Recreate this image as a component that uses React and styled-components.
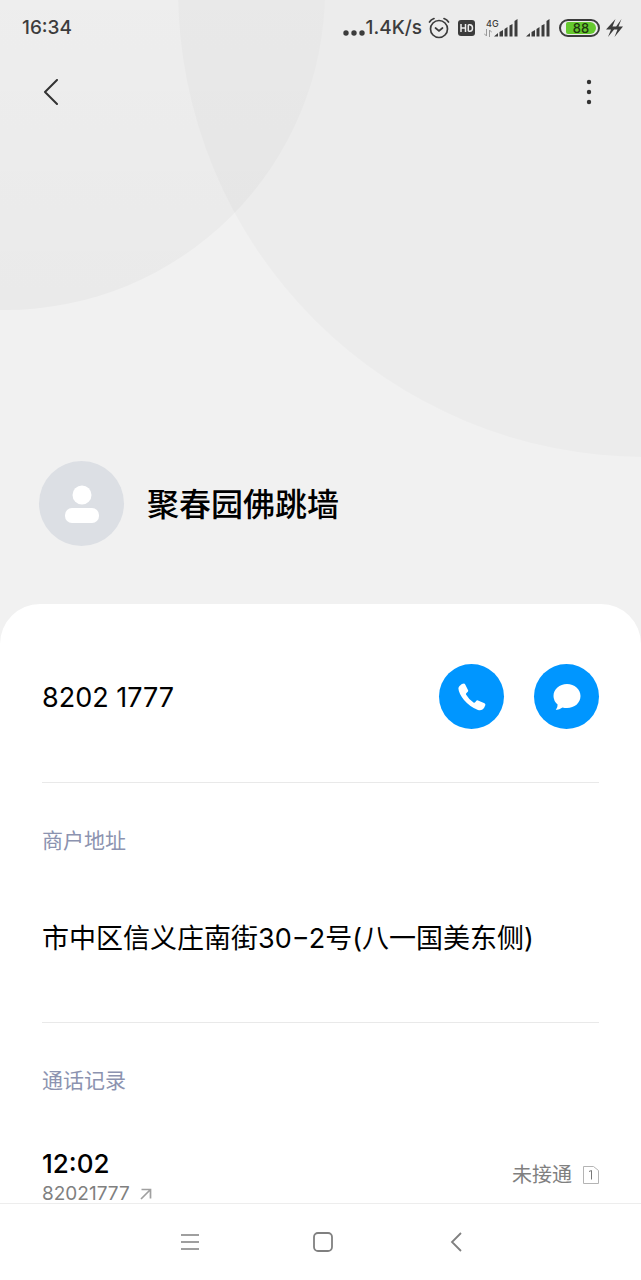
import React from 'react';
import styled, { createGlobalStyle } from 'styled-components';

const GlobalStyle = createGlobalStyle`
  * {
    box-sizing: border-box;
  }
  body {
    margin: 0;
    background: #fff;
    color: #000;
    font-family: Inter, "Noto Sans CJK SC", sans-serif;
  }
  button {
    border: 0;
    padding: 0;
    background: none;
    color: inherit;
    font: inherit;
    cursor: pointer;
  }
  svg {
    display: block;
    flex: none;
  }
`

const Page = styled.div`
  display: flex;
  flex-direction: column;
  height: 100vh;
`

const Content = styled.main`
  flex: 1;
  min-height: 0;
  overflow-y: auto;
  scrollbar-width: none;
  background: #f1f1f1;
`

const Header = styled.header`
  position: relative;
  overflow: hidden;
  padding-bottom: 58px;
`

const Backdrop = styled.svg`
  position: absolute;
  top: 0;
  left: 0;
`

const StatusBar = styled.div`
  position: relative;
  display: flex;
  align-items: center;
  justify-content: space-between;
  height: 56px;
  padding: 0 18px 0 22px;
  color: #3c3c3c;
  font-size: 19px;
  font-weight: 500;
  line-height: 24px;
`

const StatusIcons = styled.div`
  display: flex;
  align-items: center;
  gap: ${(props) => props.gap || 0}px;
`

const ToolBar = styled.div`
  position: relative;
  display: flex;
  align-items: center;
  justify-content: space-between;
  height: 72px;
  padding: 0 32px 0 31px;
`

const ToolButton = styled.button`
  display: flex;
  align-items: center;
  justify-content: center;
  width: 40px;
  height: 40px;
  color: #333;
`

const Profile = styled.div`
  position: relative;
  display: flex;
  align-items: center;
  gap: 23px;
  padding: 333px 39px 0;
`

const Avatar = styled.div`
  display: flex;
  align-items: center;
  justify-content: center;
  width: 85px;
  height: 85px;
  border-radius: 50%;
  background: #dcdfe4;
`

const Name = styled.h1`
  margin: 0;
  padding-top: 2px;
  font-size: 32px;
  font-weight: 500;
  line-height: 48px;
`

const Card = styled.div`
  padding: 0 42px 40px;
  border-radius: 40px 40px 0 0;
  background: #fff;
`

const PhoneRow = styled.section`
  display: flex;
  align-items: center;
  gap: 30px;
  padding: 60px 0 53px;
  border-bottom: 1px solid #e9e9e9;
`

const Phone = styled.div`
  flex: 1;
  padding-top: 2px;
  font-size: 27px;
  line-height: 32px;
`

const RoundButton = styled.button`
  display: flex;
  align-items: center;
  justify-content: center;
  width: 65px;
  height: 65px;
  border-radius: 50%;
  background: #0096ff;
  color: #fff;
`

const Section = styled.section`
  padding: 42px 0 ${(props) => (props.last ? 0 : 63)}px;
  border-bottom: ${(props) => (props.last ? 0 : '1px solid #e9e9e9')};
`

const SectionTitle = styled.h2`
  margin: 0;
  color: #8c93b0;
  font-size: 21px;
  font-weight: 400;
  line-height: 32px;
`

const Address = styled.p`
  margin: 61px 0 0;
  font-size: 27px;
  line-height: 41px;
`

const Record = styled.div`
  display: flex;
  align-items: center;
  justify-content: space-between;
  margin-top: 50px;
`

const RecordTime = styled.div`
  margin-bottom: 4px;
  font-size: 26px;
  font-weight: 500;
  line-height: 34px;
`

const RecordMeta = styled.div`
  display: flex;
  align-items: center;
  gap: 10px;
  color: #808080;
  font-size: ${(props) => props.size}px;
  line-height: 18px;
`

const NavBar = styled.nav`
  display: grid;
  grid-template-columns: repeat(3, 40px);
  justify-content: center;
  align-items: center;
  gap: 93px;
  height: 77px;
  padding-left: 4px;
  border-top: 1px solid #ededed;
  background: #fff;
`

const NavButton = styled(ToolButton)`
  color: #808080;
`

const Circles = () => (
  <Backdrop width='1113' height='460' aria-hidden='true'>
    <defs>
      <linearGradient id='fade' x1='0' y1='0' x2='0' y2='310' gradientUnits='userSpaceOnUse'>
        <stop offset='0' stopColor='#000' stopOpacity='0.014' />
        <stop offset='1' stopColor='#000' stopOpacity='0.03' />
      </linearGradient>
    </defs>
    <circle cx='5' cy='-10' r='320' fill='url(#fade)' />
    <circle cx='645' cy='-10' r='467' fill='#000' fillOpacity='0.02' />
  </Backdrop>
)

const Dots = () => (
  <svg width='22' height='24' fill='currentColor'>
    <circle cx='3' cy='17' r='2.7' />
    <circle cx='11' cy='17' r='2.7' />
    <circle cx='19' cy='17' r='2.7' />
  </svg>
)

const Alarm = () => (
  <svg width='22' height='24' fill='none' stroke='currentColor' strokeWidth='1.7' strokeLinecap='round'>
    <circle cx='11' cy='13' r='8.5' />
    <path d='M7.5 12l3.5 3 3.5-3' />
    <path d='M1.5 6Q3 3.5 6 2.5M20.5 6Q19 3.5 16 2.5' />
  </svg>
)

const Hd = () => (
  <svg width='18' height='18'>
    <rect x='0' y='1' width='17' height='16' rx='3' fill='currentColor' />
    <path d='M3 5v8M7.5 5v8M3 9H7.5M10.3 5.7v6.6M10.3 5.7h1.5q2.7 0 2.7 3.3t-2.7 3.3h-1.5' fill='none' stroke='#ececec' strokeWidth='1.5' />
  </svg>
)

const Signal = () => (
  <svg width='24' height='18' fill='currentColor'>
    <path d='M0 17.5L4 14v3.5zM5.5 13L9 11v6.5H5.5zM10.5 10L13.5 8v9.5h-3zM15.5 6.5L18.5 5v12.5h-3zM20.5 2L23.5 0v17.5h-3z' />
  </svg>
)

const Network = styled.div`
  display: flex;
  flex-direction: column;
  gap: 1px;
  width: 14px;
  margin-right: -4px;
  font-size: 9px;
  line-height: 9px;
  white-space: nowrap;
`

const NetworkType = styled.span`
  padding-left: 2px;
`

const Arrows = () => (
  <svg width='8' height='8' fill='none' stroke='#999' strokeWidth='1'>
    <path d='M2.5 0v7M0 4.5L2.5 7M5.5 8V1L8 3.5' />
  </svg>
)

const BatteryShell = styled.div`
  width: 41px;
  height: 18px;
  padding: 1px 2px;
  border: 2px solid currentColor;
  border-radius: 9px;
`

const BatteryLevel = styled.div`
  height: 12px;
  margin-left: 3px;
  border-radius: 2px 6px 6px 2px;
  background: #65c92e;
  font-size: 13px;
  line-height: 12px;
  text-align: center;
  color: #20380f;
`

const Bolt = () => (
  <svg width='17' height='20' fill='currentColor'>
    <path d='M9.5 1L0 11.500h5L2 19 10.500 8.500H6.500zM15.500 1L8 11.500h3.500L8.500 19 17 8.500h-4.500z' />
  </svg>
)

const App = () => (
  <Page>
    <GlobalStyle />
    <Content>
      <Header>
        <Circles />
        <StatusBar>
          <span>16:34</span>
          <StatusIcons gap={8}>
            <StatusIcons gap={6}>
              <StatusIcons gap={1}>
                <Dots />
                <span>1.4K/s</span>
              </StatusIcons>
              <StatusIcons gap={8}>
                <Alarm />
                <Hd />
              </StatusIcons>
            </StatusIcons>
            <StatusIcons>
              <Network>
                <NetworkType>4G</NetworkType>
                <Arrows />
              </Network>
              <Signal />
            </StatusIcons>
            <StatusIcons gap={9}>
              <Signal />
              <StatusIcons gap={6}>
                <BatteryShell>
                  <BatteryLevel>88</BatteryLevel>
                </BatteryShell>
                <Bolt />
              </StatusIcons>
            </StatusIcons>
          </StatusIcons>
        </StatusBar>
        <ToolBar>
          <ToolButton aria-label='返回'>
            <svg width='16' height='26' fill='none' stroke='currentColor' strokeWidth='2' strokeLinecap='round' strokeLinejoin='round'>
              <path d='M14 1L2 13l12 12' />
            </svg>
          </ToolButton>
          <ToolButton aria-label='更多'>
            <svg width='6' height='26' fill='currentColor'>
              <circle cx='3' cy='3' r='2.2' />
              <circle cx='3' cy='13' r='2.2' />
              <circle cx='3' cy='23' r='2.2' />
            </svg>
          </ToolButton>
        </ToolBar>
        <Profile>
          <Avatar>
            <svg width='34' height='38' fill='#fff'>
              <circle cx='17' cy='10' r='9.5' />
              <rect x='0' y='23' width='34' height='15' rx='7' />
            </svg>
          </Avatar>
          <Name>聚春园佛跳墙</Name>
        </Profile>
      </Header>
      <Card>
        <PhoneRow>
          <Phone>8202 1777</Phone>
          <RoundButton aria-label='拨打电话'>
            <svg width='28' height='28' fill='currentColor'>
              <path d='M1.5 3Q4 .6 6 .6Q7 .8 7.6 2.2L10.2 7.5Q10.4 8.6 9 9.5Q7.6 10.5 8 11.5Q10.5 16 15.5 19.6Q16.6 20.2 17.6 18.8Q18.8 17 20 17.4L26.5 20.2Q27.8 21 27.3 22.3Q26.5 25 24.5 26.5Q22.5 27.8 20 27Q12 24 6 17Q.8 10.5.4 5.5Q.4 4 1.5 3z' />
            </svg>
          </RoundButton>
          <RoundButton aria-label='发送短信'>
            <svg width='28' height='28' fill='currentColor'>
              <path d='M14 1C21.5 1 27.5 6 27.5 13S21.5 25 14 25Q11.5 25 9.5 24.4Q6.5 26.7 2.8 27Q4.8 24.5 4.6 21.5Q.5 18 .5 13C.5 6 6.5 1 14 1z' />
            </svg>
          </RoundButton>
        </PhoneRow>
        <Section>
          <SectionTitle>商户地址</SectionTitle>
          <Address>市中区信义庄南街30−2号(八一国美东侧)</Address>
        </Section>
        <Section last>
          <SectionTitle>通话记录</SectionTitle>
          <Record>
            <div>
              <RecordTime>12:02</RecordTime>
              <RecordMeta size={19}>
                <span>82021777</span>
                <svg width='12' height='12' fill='none' stroke='#a0a0a0' strokeWidth='1.7'>
                  <path d='M1 11L10 2M1.5 1.5H10.5v9' />
                </svg>
              </RecordMeta>
            </div>
            <RecordMeta size={20}>
              <span>未接通</span>
              <svg width='17' height='20' fill='none' stroke='#b4b4b4' strokeWidth='1'>
                <path d='M1.5 1.5h10L16.5 5.5V18.5H1.5z' />
                <path d='M7 6.5L9.5 5.5v9' stroke='#777' />
              </svg>
            </RecordMeta>
          </Record>
        </Section>
      </Card>
    </Content>
    <NavBar>
      <NavButton aria-label='菜单'>
        <svg width='18' height='18' stroke='currentColor' strokeWidth='1.7'>
          <path d='M0 2h18M0 9h18M0 16h18' />
        </svg>
      </NavButton>
      <NavButton aria-label='主页'>
        <svg width='20' height='20' fill='none' stroke='currentColor' strokeWidth='1.8'>
          <rect x='1' y='1' width='18' height='18' rx='4' />
        </svg>
      </NavButton>
      <NavButton aria-label='后退'>
        <svg width='12' height='20' fill='none' stroke='currentColor' strokeWidth='1.8'>
          <path d='M11 1L2 10l9 9' />
        </svg>
      </NavButton>
    </NavBar>
  </Page>
)

export default App
